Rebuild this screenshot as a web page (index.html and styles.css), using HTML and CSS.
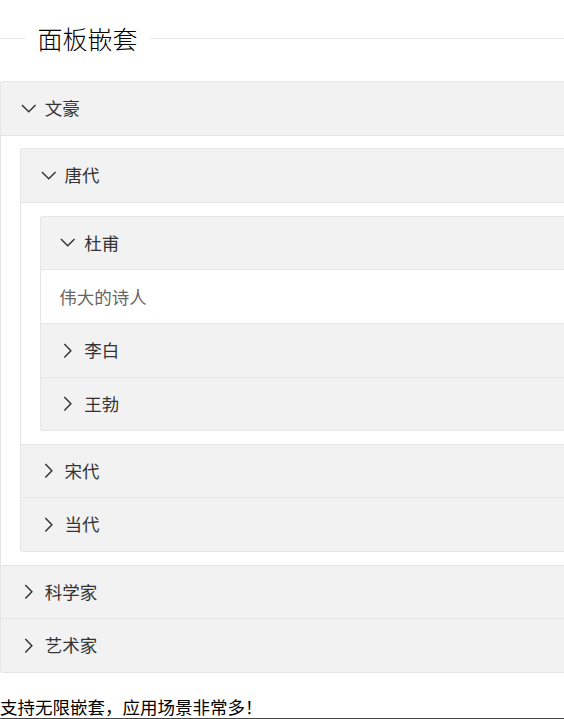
FILE: index.html
```html
<!DOCTYPE html>
<html lang="zh-CN">
<head>
<meta charset="utf-8">
<title>面板嵌套</title>
<link rel="stylesheet" href="styles.css">
</head>
<body>
<div class="page">
  <fieldset class="field-title"><legend>面板嵌套</legend></fieldset>

  <div class="collapse">
    <div class="item">
      <h2 class="title"><svg class="icon" viewBox="0 0 18 18"><path d="M2 5.2 L9 12 L16 5.2"/></svg>文豪</h2>
      <div class="content">
        <div class="collapse">
          <div class="item">
            <h2 class="title"><svg class="icon" viewBox="0 0 18 18"><path d="M2 5.2 L9 12 L16 5.2"/></svg>唐代</h2>
            <div class="content">
              <div class="collapse">
                <div class="item">
                  <h2 class="title"><svg class="icon" viewBox="0 0 18 18"><path d="M2 5.2 L9 12 L16 5.2"/></svg>杜甫</h2>
                  <div class="content content-text"><p class="text">伟大的诗人</p></div>
                </div>
                <div class="item">
                  <h2 class="title"><svg class="icon" viewBox="0 0 18 18"><path d="M5.5 2 L12.2 9 L5.5 16"/></svg>李白</h2>
                </div>
                <div class="item">
                  <h2 class="title"><svg class="icon" viewBox="0 0 18 18"><path d="M5.5 2 L12.2 9 L5.5 16"/></svg>王勃</h2>
                </div>
              </div>
            </div>
          </div>
          <div class="item">
            <h2 class="title"><svg class="icon" viewBox="0 0 18 18"><path d="M5.5 2 L12.2 9 L5.5 16"/></svg>宋代</h2>
          </div>
          <div class="item">
            <h2 class="title"><svg class="icon" viewBox="0 0 18 18"><path d="M5.5 2 L12.2 9 L5.5 16"/></svg>当代</h2>
          </div>
        </div>
      </div>
    </div>
    <div class="item">
      <h2 class="title"><svg class="icon" viewBox="0 0 18 18"><path d="M5.5 2 L12.2 9 L5.5 16"/></svg>科学家</h2>
    </div>
    <div class="item">
      <h2 class="title"><svg class="icon" viewBox="0 0 18 18"><path d="M5.5 2 L12.2 9 L5.5 16"/></svg>艺术家</h2>
    </div>
  </div>

  <p class="note">支持无限嵌套，应用场景非常多！</p>
</div>
<div class="bottom-line"></div>
</body>
</html>
```

FILE: styles.css
```css
html, body {
  margin: 0;
  padding: 0;
  overflow: hidden;
  background: #fff;
}

body {
  font-family: "Noto Sans CJK SC", "Liberation Sans", sans-serif;
  font-size: 17.5px;
  color: #333;
}

.page {
  width: 660px;
}

.field-title {
  margin: 20px 0 25px;
  padding: 0;
  border: none;
  border-top: 1px solid #e6e6e6;
  min-width: 0;
}

.field-title legend {
  margin-left: 25px;
  padding: 0 12.5px;
  font-size: 25px;
  font-weight: 300;
  line-height: 36px;
  color: #000;
}

.collapse {
  border: 1px solid #e6e6e6;
  border-radius: 2px;
}

.item {
  border-top: 1px solid #e6e6e6;
}

.item:first-child {
  border-top: none;
}

.title {
  position: relative;
  margin: 0;
  height: 52.5px;
  line-height: 52.5px;
  padding: 0 18.75px 0 43.75px;
  background: #f2f2f2;
  color: #333;
  font-size: 17.5px;
  font-weight: 400;
  overflow: hidden;
}

.icon {
  position: absolute;
  left: 18.75px;
  top: 17.5px;
  width: 17.5px;
  height: 17.5px;
  fill: none;
  stroke: #333;
  stroke-width: 1.5;
}

.content {
  padding: 12.75px 18.75px;
  border-top: 1px solid #e6e6e6;
  line-height: 1.6;
  color: #666;
}

.content-text {
  padding: 12.5px 18.75px;
}

.text {
  margin: 0;
}

.note {
  margin: 20px 0 0;
  font-size: 17.5px;
  line-height: 28px;
  color: #000;
}

.bottom-line {
  position: fixed;
  left: 0;
  right: 0;
  bottom: 0;
  height: 1px;
  background: #444;
}
```
